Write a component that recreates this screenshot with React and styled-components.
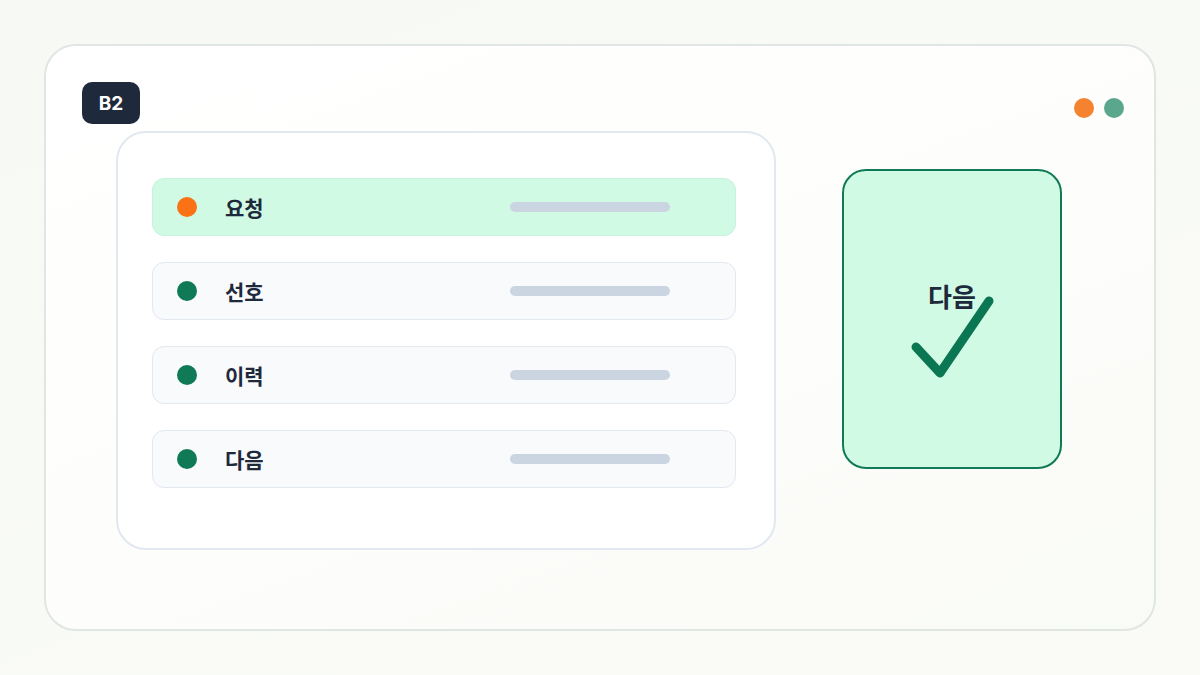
import React from "react";
import styled, { createGlobalStyle } from "styled-components";

const GlobalStyle = createGlobalStyle`
  html, body {
    margin: 0;
    padding: 0;
    background: #f8faf5;
  }
  body {
    font-family: "Inter", "Noto Sans CJK KR", sans-serif;
  }
`;

const Page = styled.div`
  width: 1200px;
  height: 675px;
  padding: 44px;
  box-sizing: border-box;
  background: linear-gradient(160deg, #f7f9f4 0%, #fafbf7 100%);
`;

const Frame = styled.div`
  height: 100%;
  box-sizing: border-box;
  border: 2px solid #e0e6e4;
  border-radius: 32px;
  background: linear-gradient(160deg, #ffffff 0%, #fdfdfb 60%, #f9fbf6 100%);
  padding: 36px 30px 0 36px;
  display: flex;
  flex-direction: column;
`;

const Header = styled.div`
  display: flex;
  align-items: flex-start;
  justify-content: space-between;
  height: 42px;
`;

const Badge = styled.div`
  width: 58px;
  height: 42px;
  border-radius: 10px;
  background: #1e293b;
  color: #ffffff;
  display: flex;
  align-items: center;
  justify-content: center;
  font-family: "Inter", "Liberation Sans", sans-serif;
  font-weight: 700;
  font-size: 19px;
`;

const Dots = styled.div`
  display: flex;
  gap: 10px;
  margin-top: 16px;
`;

const Dot = styled.span`
  display: block;
  width: ${(p) => p.size || 20}px;
  height: ${(p) => p.size || 20}px;
  border-radius: 50%;
  background: ${(p) => p.color};
  flex-shrink: 0;
`;

const Body = styled.div`
  display: flex;
  align-items: flex-start;
  margin-top: 7px;
  padding-left: 34px;
  gap: 66px;
`;

const Panel = styled.div`
  width: 660px;
  height: 419px;
  box-sizing: border-box;
  border: 2px solid #e2e8f0;
  border-radius: 30px;
  background: #ffffff;
  padding: 45px 0 0 34px;
  display: flex;
  flex-direction: column;
  gap: 26px;
`;

const Row = styled.div`
  width: 584px;
  height: 58px;
  box-sizing: border-box;
  border-radius: 12px;
  border: 1px solid ${(p) => (p.active ? "#c6f3de" : "#e2e8f0")};
  background: ${(p) => (p.active ? "#d1fae5" : "#f8fafc")};
  display: flex;
  align-items: center;
  padding-left: 24px;
`;

const Label = styled.span`
  margin-left: 28px;
  font-family: "Noto Sans CJK KR", sans-serif;
  font-weight: 700;
  font-size: 21px;
  color: #1e293b;
  line-height: 1;
`;

const Bar = styled.span`
  margin-left: auto;
  margin-right: 65px;
  width: 160px;
  height: 10px;
  border-radius: 5px;
  background: #cbd5e1;
`;

const Card = styled.div`
  margin-top: 38px;
  width: 220px;
  height: 300px;
  box-sizing: border-box;
  border: 2px solid #0f7a55;
  border-radius: 24px;
  background: #d1fae5;
  display: flex;
  flex-direction: column;
  align-items: center;
  padding-top: 110px;
`;

const CardLabel = styled.span`
  font-family: "Noto Sans CJK KR", sans-serif;
  font-weight: 700;
  font-size: 26px;
  line-height: 30px;
  color: #1e293b;
  position: relative;
  z-index: 0;
`;

const Check = styled.svg`
  margin-top: -19px;
  position: relative;
  z-index: 1;
`;

const items = [
  { label: "요청", active: true },
  { label: "선호" },
  { label: "이력" },
  { label: "다음" },
];

export default function App() {
  return (
    <>
      <GlobalStyle />
      <Page>
        <Frame>
          <Header>
            <Badge>B2</Badge>
            <Dots>
              <Dot color="#f5822f" />
              <Dot color="#5ba78d" />
            </Dots>
          </Header>
          <Body>
            <Panel>
              {items.map((it) => (
                <Row key={it.label} active={it.active}>
                  <Dot color={it.active ? "#f97316" : "#0f7a55"} />
                  <Label>{it.label}</Label>
                  <Bar />
                </Row>
              ))}
            </Panel>
            <Card>
              <CardLabel>다음</CardLabel>
              <Check width="90" height="90" viewBox="0 0 90 90">
                <path
                  d="M9 55 L33 81 L82 9"
                  fill="none"
                  stroke="#0b7652"
                  strokeWidth="9"
                  strokeLinecap="round"
                  strokeLinejoin="round"
                />
              </Check>
            </Card>
          </Body>
        </Frame>
      </Page>
    </>
  );
}
